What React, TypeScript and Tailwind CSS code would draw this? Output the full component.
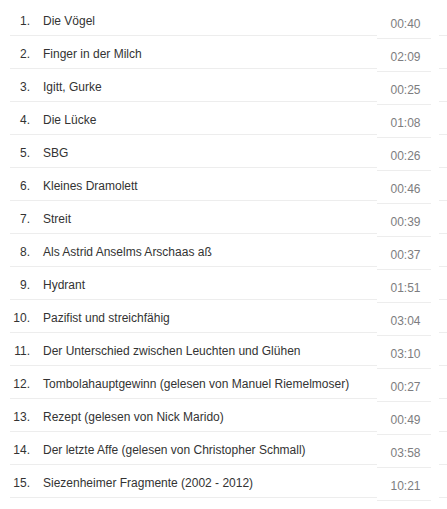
import React from "react";

const tracks: [string, string][] = [
  ["Die Vögel", "00:40"],
  ["Finger in der Milch", "02:09"],
  ["Igitt, Gurke", "00:25"],
  ["Die Lücke", "01:08"],
  ["SBG", "00:26"],
  ["Kleines Dramolett", "00:46"],
  ["Streit", "00:39"],
  ["Als Astrid Anselms Arschaas aß", "00:37"],
  ["Hydrant", "01:51"],
  ["Pazifist und streichfähig", "03:04"],
  ["Der Unterschied zwischen Leuchten und Glühen", "03:10"],
  ["Tombolahauptgewinn (gelesen von Manuel Riemelmoser)", "00:27"],
  ["Rezept (gelesen von Nick Marido)", "00:49"],
  ["Der letzte Affe (gelesen von Christopher Schmall)", "03:58"],
  ["Siezenheimer Fragmente (2002 - 2012)", "10:21"],
];

export default function App() {
  return (
    <div
      className="w-[447px] h-[509px] bg-white overflow-hidden flex pt-[3px]"
      style={{ fontFamily: '"Liberation Sans", Arial, sans-serif' }}
    >
      <div className="ml-[10px] w-[367px] flex flex-col text-[12px]">
        {tracks.map(([title], i) => (
          <div
            key={i}
            className="h-[33px] border-b border-[#ededed] flex items-center pt-[3px] text-[#333]"
          >
            <span className="w-[20px] text-right">{i + 1}.</span>
            <span className="ml-[13px] whitespace-nowrap">{title}</span>
          </div>
        ))}
      </div>
      <div className="w-[54px] mt-[3px] flex flex-col text-[12px]">
        {tracks.map(([, d], i) => (
          <div
            key={i}
            className="h-[33px] border-b border-[#ededed] flex items-center justify-center pl-[3px] pt-[3px] text-[#7d7d80]"
          >
            {d}
          </div>
        ))}
      </div>
      <div className="ml-[8px] flex-1 flex flex-col">
        {tracks.map((_, i) => (
          <div key={i} className="h-[33px] border-b border-[#ededed]" />
        ))}
      </div>
    </div>
  );
}
